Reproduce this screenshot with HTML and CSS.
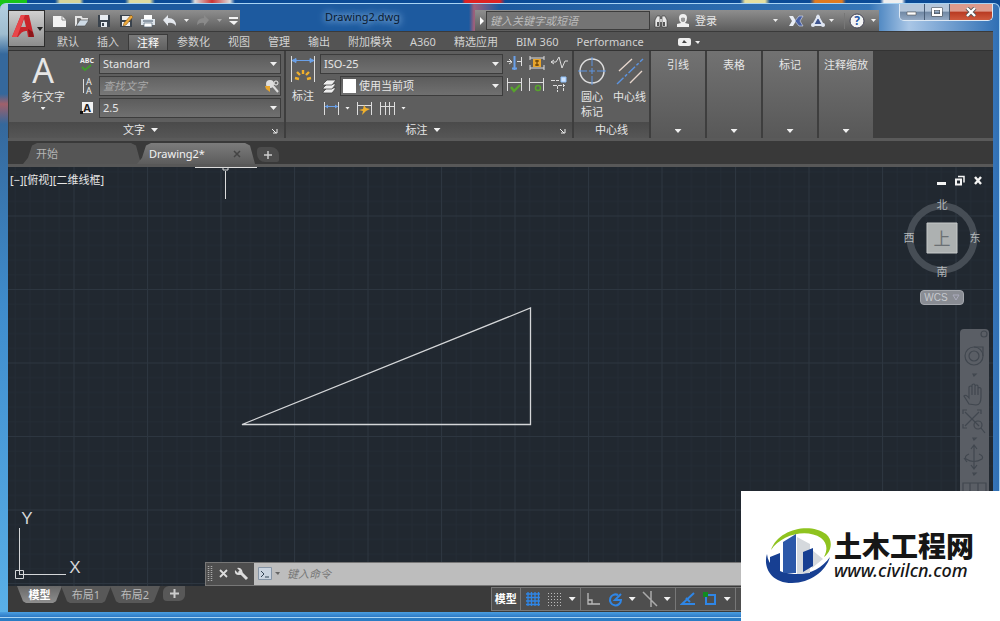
FILE: index.html
```
<!DOCTYPE html>
<html lang="zh-CN">
<head>
    <meta charset="UTF-8">
    <meta name="viewport" content="width=device-width, initial-scale=1.0">
    <title>Drawing2.dwg</title>
    <link rel="stylesheet" href="styles.css">
</head>
<body>
    <div class="window">
        <header class="titlebar">
            <button class="app-button" aria-label="应用程序菜单">
                <svg width="36" height="34" viewBox="0 0 36 34">
                    <path d="M3 25 L12 3 H20 L25 25 H19 L18 19 Q13 18 9 25 Z M12 15 H17 L15 7 Z" fill="#c9252b" fill-rule="evenodd"/>
                    <path d="M12 3 L16 3 L8 25 L3 25 Z" fill="#e8464a"/>
                    <path d="M19 17 L20 25 L25 25 L24 20 Z" fill="#8e1519"/>
                    <path d="M28 15 h6 l-3 4z" fill="#222"/>
                </svg>
            </button>
            <div class="quick-access">
                <button class="tool" aria-label="新建"><svg width="16" height="16"><path d="M1 3h9l4 4v7H1z" fill="#f2f2f2"/><path d="M10 3v4h4" fill="none" stroke="#888"/></svg></button>
                <button class="tool" aria-label="打开"><svg width="16" height="16"><path d="M2 13V4h5l1 2h5v2" fill="none" stroke="#e6e6e6" stroke-width="2"/><path d="M2 13l4-6h9l-4 6z" fill="#cfdbe6" stroke="#444" stroke-width=".6"/></svg></button>
                <button class="tool" aria-label="保存"><svg width="16" height="16"><path d="M2 2h12v12H2z" fill="#3a434d"/><path d="M4 2h8v5H4zM5 9h6v5H5z" fill="#e8edf2"/><path d="M6 10h2v3H6z" fill="#3a434d"/></svg></button>
                <button class="tool" aria-label="另存为"><svg width="16" height="16"><path d="M2 2h12v12H2z" fill="#3a434d"/><path d="M4 3h8v4H4zM4 9h8v4H4z" fill="#eee"/><path d="M6 10l7-8 2 2-7 8-3 1z" fill="#eda93b" stroke="#7a4c10" stroke-width=".5"/></svg></button>
                <button class="tool" aria-label="打印"><svg width="16" height="16"><path d="M4 2h8v4H4z" fill="#fff"/><path d="M1 6h14v6H1z" fill="#dce3ea"/><path d="M4 10h8v4H4z" fill="#fff" stroke="#567" stroke-width=".7"/><path d="M3 8h10" stroke="#456"/></svg></button>
                <button class="tool" aria-label="放弃"><svg width="16" height="16"><path d="M1 7l5-5v3q8 0 8 8q-3-4-8-3v3z" fill="#e4e8ee"/></svg></button>
                <button class="drop" aria-label="放弃列表"></button>
                <button class="tool" aria-label="重做"><svg width="16" height="16"><path d="M14 7l-5-5v3q-7 0-7 7q3-3 7-2v3z" fill="#8a8a8a"/></svg></button>
                <button class="drop dim" aria-label="重做列表"></button>
                <button class="tool" aria-label="自定义快速访问工具栏"><svg width="12" height="12"><path d="M1 2h9v2H1zM1 6h9l-4 4z" fill="#f4f4f4"/></svg></button>
            </div>
            <h1 class="document-title">Drawing2.dwg</h1>
            <div class="info-center">
                <button class="play" aria-label="收拢"><svg width="8" height="10"><path d="M2 1l4 4-4 4z" fill="#fff"/></svg></button>
                <input class="help-search" type="text" placeholder="键入关键字或短语" aria-label="键入关键字或短语">
                <button class="tool" aria-label="搜索"><svg width="16" height="16"><path d="M2 14V7l2-4h3v11zM9 14V3h3l2 4v7z" fill="#e8e8e8" stroke="#333" stroke-width=".6"/><path d="M4 9h2v4H4zM10 9h2v4h-2z" fill="#555"/><path d="M7 6h2v3H7z" fill="#ccc"/></svg></button>
                <button class="login"><svg width="16" height="16"><path d="M4 5q0-4 4-4t4 4q0 3-2 5l4 1v3H2v-3l4-1Q4 8 4 5z" fill="#f0f0f0"/><path d="M6 5q2-1 4 0v3q-2 2-4 0z" fill="#999"/></svg>登录</button>
                <button class="drop login-drop" aria-label="登录选项"></button>
                <button class="tool" aria-label="Exchange"><svg width="16" height="16"><path d="M1 3h4l3 5-3 5H1l3-5z" fill="#e9edf5"/><path d="M15 3h-4L7 8l4 5h4l-3-5z" fill="#4860a4" stroke="#dbe2f2" stroke-width=".6"/></svg></button>
                <button class="tool a360" aria-label="A360"><svg width="16" height="16"><path d="M8 3L3 12h10z" fill="#3f5590" stroke="#dfe6f2" stroke-width="2"/><circle cx="8" cy="4" r="2" fill="#dfe6f2"/><circle cx="3" cy="12" r="2" fill="#dfe6f2"/><circle cx="13" cy="12" r="2" fill="#dfe6f2"/></svg></button>
                <button class="drop" aria-label="A360 选项"></button>
                <button class="tool help" aria-label="帮助"><svg width="16" height="16"><circle cx="8" cy="8" r="7" fill="#f4f4f4" stroke="#445"/><text x="8" y="12" text-anchor="middle" font-size="12" font-weight="bold" fill="#2257a8">?</text></svg></button>
                <button class="drop" aria-label="帮助选项"></button>
            </div>
            <div class="window-buttons">
                <button aria-label="最小化"><svg width="12" height="10"><path d="M1 5h9v3H1z" fill="#fff" stroke="#555" stroke-width=".6"/></svg></button>
                <button aria-label="最大化"><svg width="12" height="10"><path d="M2 2h8v6H2z" fill="none" stroke="#444" stroke-width="3"/><path d="M2 2h8v6H2z" fill="none" stroke="#fff" stroke-width="2"/></svg></button>
                <button class="close" aria-label="关闭"><svg width="12" height="10"><path d="M2 1l8 8M10 1l-8 8" stroke="#555" stroke-width="4"/><path d="M2 1l8 8M10 1l-8 8" stroke="#fff" stroke-width="2.4"/></svg></button>
            </div>
        </header>

        <nav class="ribbon-tabs">
            <button>默认</button>
            <button>插入</button>
            <button class="active">注释</button>
            <button>参数化</button>
            <button>视图</button>
            <button>管理</button>
            <button>输出</button>
            <button>附加模块</button>
            <button>A360</button>
            <button>精选应用</button>
            <button>BIM 360</button>
            <button>Performance</button>
            <button class="minimize" aria-label="最小化功能区"><svg width="24" height="10"><rect x="0" y="1" width="13" height="8" rx="2" fill="#eee"/><path d="M4 6l2-3 3 3z" fill="#444"/><path d="M17 4h5l-2 3z" fill="#eee"/></svg></button>
        </nav>

        <section class="ribbon">
            <div class="panel panel-text">
                <div class="panel-body">
                    <button class="large-button mtext">
                        <b class="letter">A</b>
                        <span>多行文字</span>
                        <i class="arrow"></i>
                    </button>
                    <div class="field-grid">
                        <svg width="20" height="20"><text x="10" y="9" text-anchor="middle" font-size="7" font-weight="bold" fill="#eee">ABC</text><path d="M5 13l3 3 6-5" fill="none" stroke="#3f9a2c" stroke-width="2"/></svg>
                        <select aria-label="文字样式"><option>Standard</option></select>
                        <svg width="20" height="20"><path d="M6.500 3v14" stroke="#ddd"/><text x="12" y="9" text-anchor="middle" font-size="9" fill="#eee">A</text><text x="12" y="18" text-anchor="middle" font-size="9" fill="#eee">A</text></svg>
                        <div class="find">
                            <input type="text" placeholder="查找文字" aria-label="查找文字">
                            <button aria-label="查找"><svg width="16" height="16"><circle cx="6" cy="6" r="4" fill="#ddd"/><path d="M1 8h5v6l-4-3z" fill="#e8a52c"/><path d="M9 8l5 6" stroke="#ddd" stroke-width="2"/><circle cx="12" cy="5" r="2" fill="none" stroke="#eee"/></svg></button>
                        </div>
                        <svg width="20" height="20"><path d="M5 4h11v11H5z" fill="#f2f2f2"/><text x="10" y="14" text-anchor="middle" font-size="11" font-weight="bold" fill="#222">A</text><path d="M3 13h3v3H3z" fill="#111"/></svg>
                        <select aria-label="文字高度"><option>2.5</option></select>
                    </div>
                </div>
                <button class="panel-title">文字<i class="arrow"></i></button>
                <button class="launcher" aria-label="文字样式设置"><svg width="6" height="6"><path d="M0 1l4 4M5 1v4H1" fill="none" stroke="#eee"/></svg></button>
            </div>

            <div class="panel panel-dim">
                <div class="panel-body">
                    <button class="large-button dimension">
                        <svg width="28" height="30"><path d="M2.500 2v26M25.500 2v26" stroke="#ddd"/><path d="M3 6.500h22M3 6.500l4-2v4zM25 6.500l-4-2v4z" stroke="#6aa0e8" fill="#6aa0e8"/><g stroke="#f0b02c" stroke-width="2.400"><path d="M6 24l4 1M8 18l3 3M14 16v4M20 18l-3 3M22 24l-4 1"/></g></svg>
                        <span>标注</span>
                    </button>
                    <div class="dim-fields">
                        <select aria-label="标注样式"><option>ISO-25</option></select>
                        <div class="dim-layer">
                            <svg width="18" height="20"><g fill="#eee" stroke="#444" stroke-width=".8"><path d="M3 16l4-4h9l-4 5H3z"/><path d="M3 12l4-4h9l-4 5H3z"/><path d="M3 8l4-4h9l-4 5H3z"/></g></svg>
                            <select class="with-swatch" aria-label="标注图层"><option>使用当前项</option></select>
                        </div>
                        <div class="dim-tools">
                            <button aria-label="线性"><svg width="18" height="18"><path d="M2.500 3v13M16.500 3v13" stroke="#ddd"/><path d="M3 7.500h13" stroke="#6aa0e8"/><path d="M3 7.500l3-2v4zM16 7.500l-3-2v4z" fill="#6aa0e8"/></svg></button>
                            <i class="arrow small"></i>
                            <button aria-label="快速标注"><svg width="18" height="18"><path d="M2.500 3v13M16.500 3v13M3 6.500h13" stroke="#ddd"/><path d="M9 6l2 3 4 1-4 2-4 4 1-4-4-1 4-1z" fill="#f0b02c"/></svg></button>
                            <button aria-label="连续"><svg width="18" height="18"><path d="M2.500 3v13M7.500 3v13M11.500 3v13M16.500 3v13M3 7.500h13" stroke="#ddd"/></svg></button>
                            <i class="arrow small"></i>
                        </div>
                    </div>
                    <div class="dim-icons">
                        <button aria-label="打断"><svg width="18" height="18"><path d="M1 7.500h5M11 7.500h5M15.500 3v9M3 5l3 3-3 2" stroke="#ddd" fill="none"/><path d="M8.500 2v14M6 14.500h5" stroke="#6aa0e8" stroke-width="2"/></svg></button>
                        <button aria-label="调整间距"><svg width="18" height="18"><path d="M2 2v4M16 2v4M2 4h14M2 11v5M16 11v5M2 14h14" stroke="#ddd" fill="none"/><path d="M5 5h8v8H5z" fill="#e8a52c"/><path d="M9 6v6M7 7h4M7 11h4" stroke="#553300"/></svg></button>
                        <button aria-label="折弯标注"><svg width="18" height="18"><path d="M1 8h5l3-5 3 11 3-7h3M4 6L1 8l3 2" stroke="#ddd" fill="none"/></svg></button>
                        <button aria-label="检验"><svg width="18" height="18"><path d="M1.500 2v13M15.500 2v13M2 6.500h13" stroke="#ddd"/><path d="M5 11l3 4 6-6" stroke="#58a52c" stroke-width="2.400" fill="none"/></svg></button>
                        <button aria-label="更新"><svg width="18" height="18"><path d="M1.500 2v13M15.500 2v13M2 6.500h13" stroke="#ddd"/><circle cx="10" cy="12" r="2.500" stroke="#58a52c" stroke-width="1.500" fill="none"/></svg></button>
                        <button aria-label="重新关联"><svg width="18" height="18"><path d="M11 1h5v5h-5z" fill="#cfe4ff" stroke="#8fc0f8"/><path d="M1 4.500h8M3 9.500h12" stroke="#ddd" stroke-dasharray="4 1"/><path d="M7.500 10v6M13.500 8v8" stroke="#ddd" stroke-dasharray="3 1"/></svg></button>
                    </div>
                </div>
                <button class="panel-title">标注<i class="arrow"></i></button>
                <button class="launcher" aria-label="标注样式设置"><svg width="6" height="6"><path d="M0 1l4 4M5 1v4H1" fill="none" stroke="#eee"/></svg></button>
            </div>

            <div class="panel panel-center">
                <div class="panel-body">
                    <button class="large-button"><svg width="30" height="32"><circle cx="15" cy="17" r="12" fill="none" stroke="#ddd" stroke-width="1.500"/><path d="M1 17h9M12 17h6M20 17h9M15 3v9M15 14v6M15 22v9" stroke="#5c94e0"/></svg><span>圆心<br>标记</span></button>
                    <button class="large-button"><svg width="30" height="32"><path d="M4 17L17 5M15 29l12-12" stroke="#e6d6cc" stroke-width="1.400"/><path d="M2 30L28 5" stroke="#5c94e0" stroke-width="1.400" stroke-dasharray="9 2 3 2"/></svg><span>中心线</span></button>
                </div>
                <div class="panel-title">中心线</div>
            </div>

            <button class="collapsed-panel">引线<i class="arrow"></i></button>
            <button class="collapsed-panel">表格<i class="arrow"></i></button>
            <button class="collapsed-panel">标记<i class="arrow"></i></button>
            <button class="collapsed-panel">注释缩放<i class="arrow"></i></button>
        </section>

        <nav class="file-tabs">
            <button class="file-tab">开始</button>
            <button class="file-tab active">Drawing2*<svg width="8" height="8"><path d="M1 1l6 6M7 1L1 7" stroke="#444" stroke-width="1.500"/></svg></button>
            <button class="add-file" aria-label="新图形"><svg width="10" height="10"><path d="M5 1v8M1 5h8" stroke="#ccc" stroke-width="1.500"/></svg></button>
        </nav>

        <main class="canvas">
            <svg class="drawing">
                <defs>
                    <pattern id="grid" x="65.500" y="48.500" width="73.500" height="73.500" patternUnits="userSpaceOnUse">
                        <path d="M15.200 0v73.500M29.900 0v73.500M44.600 0v73.500M59.300 0v73.500M0 15.200h73.500M0 29.900h73.500M0 44.600h73.500M0 59.300h73.500" stroke="#242c35"/>
                        <path d="M.5 0v73.500M0 .5h73.500" stroke="#2d3640"/>
                    </pattern>
                </defs>
                <rect width="100%" height="100%" fill="url(#grid)"/>
                <path d="M234 257.500L522.500 141V257.500z" fill="none" stroke="#d4d6d8" stroke-width="1.300"/>
                <path d="M187 .5h62M217.500 4v28M215 0h5v3h-5z" fill="none" stroke="#dcdcdc"/>
            </svg>

            <div class="viewport-controls">
                <button>[−]</button><button>[俯视]</button><button>[二维线框]</button>
            </div>

            <div class="document-buttons">
                <button aria-label="最小化图形"><svg width="12" height="12"><path d="M1 7h9v3H1z" fill="#f4f4f4"/></svg></button>
                <button aria-label="还原图形"><svg width="12" height="12"><path d="M2 4.500h5v5H2z" fill="none" stroke="#f4f4f4" stroke-width="2"/><path d="M4 1.500h6v6" fill="none" stroke="#f4f4f4" stroke-width="1.500"/></svg></button>
                <button aria-label="关闭图形"><svg width="12" height="12"><path d="M3 2l6 7M9 2L3 9" stroke="#f4f4f4" stroke-width="2.400"/></svg></button>
            </div>

            <div class="view-cube">
                <svg width="84" height="88">
                    <circle cx="42" cy="43" r="32" fill="none" stroke="#464d55" stroke-width="7"/>
                    <path d="M27 28h30v30H27z" fill="#adb1b1" stroke="#c6c9c9"/>
                    <g fill="#b4b8bb" font-size="11" text-anchor="middle">
                        <text x="42" y="14">北</text>
                        <text x="9" y="47">西</text>
                        <text x="75" y="47">东</text>
                        <text x="42" y="81">南</text>
                    </g>
                    <text x="42" y="50" text-anchor="middle" font-size="17" fill="#6b7074">上</text>
                </svg>
                <button class="wcs">WCS <svg width="8" height="7"><path d="M1 1h6L4 6z" fill="none" stroke="#aab"/></svg></button>
            </div>

            <div class="nav-bar">
                <svg width="29" height="170" fill="none" stroke="#41474f" stroke-width="1.200">
                    <circle cx="24" cy="5" r="3"/>
                    <circle cx="14" cy="27" r="9"/><circle cx="14" cy="27" r="5"/><path d="M14 18h9v9"/>
                    <path d="M13 45h3l-2 2z"/>
                    <path d="M9 75l-5-8q2-2 5 2V58q2-2 3 0v8-10q2-2 3 0v10-9q2-2 3 0v9-7q3-1 3 1v8q0 8-5 8z"/>
                    <path d="M5 83l14 14M19 83L5 97M3 85v-4h4M17 81h4v4M3 95v4h4"/><circle cx="18" cy="96" r="4"/><path d="M21 99l4 5"/>
                    <path d="M13 109h3l-2 2z"/>
                    <path d="M14 117v22M11 120l3-4 3 4M11 136l3 4 3-4M9 125q-5 2-3 5 8 5 16 0 2-3-3-5M7 133l-3-4"/>
                    <path d="M13 144h3l-2 2z"/>
                    <path d="M3 154h23v10H3zM10 154v10M18 154v10"/>
                </svg>
            </div>

            <svg class="ucs" width="90" height="78">
                <path d="M11.500 20v47M12 66.500h46" stroke="#d4d6d8"/>
                <path d="M7.500 62.500h8v8h-8z" fill="none" stroke="#d4d6d8"/>
                <text x="19" y="16" text-anchor="middle" font-size="17">Y</text>
                <text x="67" y="65" text-anchor="middle" font-size="17">X</text>
            </svg>

            <div class="command-line">
                <svg width="8" height="18"><path d="M2.500 1v16M5.500 1v16" stroke="#aaa" stroke-width="1.500" stroke-dasharray="1 1"/></svg>
                <button aria-label="关闭命令行"><svg width="12" height="12"><path d="M2 2l7 7M9 2L2 9" stroke="#ddd" stroke-width="1.800"/></svg></button>
                <button aria-label="自定义"><svg width="16" height="16"><path d="M5 5l8 8" stroke="#ddd" stroke-width="3"/><path d="M3 2l3 3-2 2-3-3q-1 5 4 5 5 0 3-5Q6 1 3 2z" fill="#ddd"/></svg></button>
                <div class="command-entry">
                    <svg width="24" height="16"><path d="M1.500 1.500h13v12h-13z" fill="#c9d3df" stroke="#8594a5"/><path d="M4 5l3 3-3 3M8 11h4" fill="none" stroke="#345"/><path d="M18 6h5l-2 3z" fill="#666"/></svg>
                    <input type="text" placeholder="键入命令" aria-label="键入命令">
                </div>
            </div>
        </main>

        <footer class="status-bar">
            <nav class="layout-tabs">
                <button class="active">模型</button>
                <button>布局1</button>
                <button>布局2</button>
                <button class="add" aria-label="新建布局"><svg width="9" height="9"><path d="M4.500 0v9M0 4.500h9" stroke="#ccc" stroke-width="2"/></svg></button>
            </nav>
            <div class="status-tools">
                <button class="space">模型</button>
                <div class="status-group">
                    <button aria-label="栅格"><svg width="16" height="16"><path d="M3 1v14M6.500 1v14M10 1v14M13.500 1v14M1 3h14M1 6.500h14M1 10h14M1 13.500h14" stroke="#2f86e6" stroke-width="1.300"/></svg></button>
                    <button aria-label="捕捉"><svg width="16" height="16"><path d="M1 2.500h14M1 5.500h14M1 8.500h14M1 11.500h14M1 14.500h14" stroke="#bbb" stroke-dasharray="1 2"/></svg></button>
                    <i class="arrow"></i>
                </div>
                <div class="status-group">
                    <button aria-label="正交"><svg width="16" height="16"><path d="M3 2v11h12M3 9h4v4" fill="none" stroke="#bbb" stroke-width="1.300"/></svg></button>
                    <button aria-label="极轴追踪"><svg width="16" height="16"><path d="M11 4a5.500 5.500 0 1 0 3 5H8l6-6" fill="none" stroke="#2f86e6" stroke-width="2"/></svg></button>
                    <i class="arrow"></i>
                    <button aria-label="等轴测草图"><svg width="16" height="16"><path d="M1 1l14 14M9 0v16" stroke="#aaa" stroke-width="1.500"/></svg></button>
                    <i class="arrow"></i>
                </div>
                <div class="status-group">
                    <button aria-label="对象捕捉追踪"><svg width="16" height="16"><path d="M14 2L2 13h13" fill="none" stroke="#2f86e6" stroke-width="2"/><path d="M6 7l4 4" stroke="#2f86e6" stroke-width="2"/></svg></button>
                    <button aria-label="对象捕捉"><svg width="16" height="16"><path d="M4 4h9v9H4z" fill="none" stroke="#2f86e6" stroke-width="2"/><path d="M1 1h5v5H1z" fill="#128a20"/></svg></button>
                    <i class="arrow"></i>
                </div>
                <div class="status-group">
                    <button aria-label="线宽"><svg width="16" height="16"><path d="M1 13L14 3v10z" fill="#2f86e6"/></svg></button>
                </div>
            </div>
        </footer>
    </div>

    <a class="site-badge" href="#">
        <svg width="70" height="60" viewBox="0 0 70 60">
            <path d="M7 24C14 3 46-4 62 8c8 7 5 18-2 23 4-8 3-14-3-19C42 2 17 9 7 24z" fill="#8fc31f"/>
            <path d="M3 28C-1 40 6 57 28 57c18 0 34-12 38-26-8 11-20 18-36 17C14 47 4 40 3 28z" fill="#173f92"/>
            <path d="M33 11l13 7v29l-13 1zM48 24l11 9-11 9z" fill="#d5d9dd"/>
            <path d="M19 16l13-8v39H19z" fill="#2c58a8"/>
            <path d="M6 31l10-4v19q-7-2-10-7zM39 26l10-4v18l-10 6z" fill="#173f92"/>
        </svg>
        <span class="site-name">
            <strong>土木工程网</strong>
            <span>www.civilcn.com</span>
        </span>
    </a>
</body>
</html>
```
FILE: styles.css
```
* {
    box-sizing: border-box;
}

body {
    margin: 0;
    height: 100vh;
    overflow: hidden;
    padding: 3px 0;
    display: flex;
    font-family: "Noto Sans", "Noto Sans CJK SC", sans-serif;
    font-size: 11px;
    line-height: 16px;
    color: #e6e6e6;
    background: linear-gradient(90deg, #18c418 27px, #0b4b96 27px, #0b4b96 55px, #d8d49a 60px, #d8d49a 80px, #0b4b96 84px, #0b4b96 125px, #e0dca0 130px, #e0dca0 150px, #0b4b96 155px, #0b4b96 190px, #ddd 195px, #c33 212px, #ddd 230px, #0b4b96 235px, #0b4b96 462px, #d22 465px, #d22 500px, #0b4b96 505px, #0b4b96 740px, #e6e0a0 745px, #e6e0a0 765px, #0b4b96 770px, #0b4b96 810px, #e07a20 815px, #e07a20 842px, #0b4b96 846px, #0b4b96 880px, #eee 884px, #eee 902px, #0b4b96 906px) no-repeat top / 100% 8px, #2a7cc4;
}

button, input, select {
    margin: 0;
    padding: 0;
    border: none;
    background: none;
    color: inherit;
    font: inherit;
}

button {
    cursor: pointer;
    white-space: nowrap;
}

svg {
    display: block;
    flex: none;
}

.window {
    flex: 1;
    min-width: 0;
    display: flex;
    flex-direction: column;
    padding: 0 6px 5px 8px;
    border: 1px solid #a8d4f4;
    border-left: none;
    border-radius: 6px 6px 0 0;
    background:
        linear-gradient(#4a9fe2, #2c78c4) no-repeat bottom / 100% 5px,
        linear-gradient(#b4cfe0, #9fbdd0 30px, #35689c 50px, #35689c 90px, #a0606a 100px, #35689c 120px, #3f8ccc 300px, #5ab0e8) no-repeat left / 8px 100%,
        linear-gradient(90deg, #1d5a9f 45%, #1d5a9f calc(100% - 530px), #a0607a calc(100% - 525px), #1d5a9f calc(100% - 500px), #3576b8 calc(100% - 130px), #a9c6e6 calc(100% - 90px), #2f6fb4 100%);
}

/* title bar */

.titlebar {
    position: relative;
    display: flex;
    align-items: flex-end;
    height: 27px;
}

.app-button {
    position: absolute;
    z-index: 1;
    left: 0;
    top: 6px;
    width: 37px;
    height: 37px;
    border: 1px solid #2c2c2c;
    background: linear-gradient(#d0d0d0, #8c8c8c);
}

.quick-access, .info-center {
    display: flex;
    align-items: center;
    height: 21px;
    background: linear-gradient(#8e8e8e, #5c5c5c);
}

.quick-access {
    gap: 6px;
    padding-left: 44px;
}

.tool {
    display: flex;
}

.drop {
    width: 5px;
    height: 3px;
    background: #eee;
    clip-path: polygon(0 0, 100% 0, 50% 100%);
}

.dim {
    opacity: 0.4;
}

.document-title {
    flex: 1;
    margin: 0;
    padding-left: 10px;
    text-align: center;
    font-size: 11px;
    font-weight: normal;
    line-height: 28px;
    color: #0a1a30;
    text-shadow: 0 0 6px #9cc4ec, 0 0 10px #9cc4ec;
}

.info-center {
    gap: 6px;
    padding-right: 3px;
}

.play {
    display: flex;
    align-items: center;
    height: 18px;
    padding-left: 3px;
}

.help-search {
    width: 164px;
    height: 19px;
    margin: 0 -3px 0 -6px;
    padding: 0 3px;
    border: 1px solid #3c3c3c;
    background: #747474;
}

input::placeholder {
    color: #bcbcbc;
    font-style: italic;
    opacity: 1;
}

.login {
    display: flex;
    align-items: center;
    gap: 4px;
    margin-right: 50px;
}

.login-drop {
    margin-right: 4px;
}

.a360 {
    margin-right: -3px;
}

.help {
    margin-left: 4px;
    padding-left: 4px;
    border-left: 1px solid #777;
}

.window-buttons {
    align-self: flex-start;
    display: flex;
    margin-left: 20px;
    border: 1px solid #dce8f4;
    border-top: none;
    border-radius: 0 0 5px 5px;
    overflow: hidden;
}

.window-buttons button {
    display: flex;
    align-items: center;
    justify-content: center;
    width: 25px;
    height: 16px;
    border-right: 1px solid #4a5f78;
    background: linear-gradient(#b4c6da 45%, #7088a4 50%, #94aac4);
}

.window-buttons .close {
    width: 42px;
    border: none;
    background: linear-gradient(#dd9a8c 45%, #b83a22 50%, #cf5a3e);
}

/* ribbon */

.ribbon-tabs {
    display: flex;
    height: 20px;
    padding: 2px 0 0 40px;
    border-top: 1px solid #3a3a3a;
    border-bottom: 1px solid #333;
    background: #545454;
    color: #d2d2d2;
}

.ribbon-tabs button {
    padding: 0 9px;
}

.ribbon-tabs .active {
    padding: 0 8px;
    border: 1px solid #3a3a3a;
    border-bottom: none;
    background: linear-gradient(#7a7a7a, #606060);
    color: #fff;
    line-height: 14px;
}

.ribbon-tabs .minimize {
    margin-left: 16px;
}

.ribbon {
    display: flex;
    gap: 2px;
    height: 90px;
    padding-left: 1px;
    border-bottom: 3px solid #5a5a5a;
    background: #3e3e3e;
}

.panel {
    position: relative;
    display: flex;
    flex-direction: column;
    background: #5e5e5e;
}

.panel-text {
    width: 275px;
}

.panel-dim {
    width: 286px;
}

.panel-center {
    width: 75px;
}

.panel-body {
    flex: 1;
    display: flex;
    padding-top: 3px;
}

.panel-title {
    display: flex;
    align-items: center;
    justify-content: center;
    gap: 6px;
    height: 16px;
    background: linear-gradient(#4a4a4a, #565656);
}

button.panel-title {
    padding-right: 12px;
}

.arrow {
    width: 7px;
    height: 4px;
    background: #f0f0f0;
    clip-path: polygon(0 0, 100% 0, 50% 100%);
}

.arrow.small {
    width: 5px;
    height: 3px;
}

.launcher {
    position: absolute;
    right: 6px;
    bottom: 4px;
}

.large-button {
    display: flex;
    flex-direction: column;
    align-items: center;
    line-height: 15px;
}

.mtext {
    width: 68px;
    gap: 3px;
}

.mtext .arrow {
    width: 5px;
    height: 3px;
}

.letter {
    font-size: 34px;
    font-weight: normal;
    line-height: 32px;
}

.dimension {
    width: 34px;
    gap: 4px;
}

.field-grid {
    flex: 1;
    display: grid;
    grid-template-columns: 20px 1fr;
    grid-auto-rows: 20px;
    gap: 2px;
    padding-right: 3px;
}

select, .find {
    width: 100%;
    min-width: 0;
    height: 20px;
    border: 1px solid #3c3c3c;
    background: linear-gradient(#626262, #787878);
}

select {
    appearance: none;
    padding: 0 3px;
    background: url("data:image/svg+xml,%3Csvg xmlns='http://www.w3.org/2000/svg' width='7' height='4'%3E%3Cpath d='M0 0h7L3.5 4z' fill='%23f0f0f0'/%3E%3C/svg%3E") no-repeat right 3px center, linear-gradient(#5c5c5c, #707070);
}

.find {
    display: flex;
    align-items: center;
    padding-left: 3px;
}

.find input {
    flex: 1;
    min-width: 0;
}

.find input::placeholder {
    color: #a8a8a8;
}

.dim-fields {
    width: 183px;
    display: flex;
    flex-direction: column;
    gap: 2px;
}

.dim-layer {
    display: flex;
    gap: 2px;
}

.with-swatch {
    padding-left: 18px;
    background: linear-gradient(#fff, #fff) no-repeat 2px 2px / 13px 14px, url("data:image/svg+xml,%3Csvg xmlns='http://www.w3.org/2000/svg' width='7' height='4'%3E%3Cpath d='M0 0h7L3.5 4z' fill='%23f0f0f0'/%3E%3C/svg%3E") no-repeat right 3px center, linear-gradient(#5c5c5c, #707070);
}

.dim-tools {
    display: flex;
    align-items: center;
    gap: 5px;
    height: 20px;
    padding-left: 2px;
}

.dim-icons {
    display: grid;
    grid-template-columns: 18px 18px 18px;
    grid-auto-rows: 18px;
    gap: 4px;
    padding-left: 3px;
}

.panel-center .panel-body {
    justify-content: space-around;
}

.panel-center .large-button {
    gap: 3px;
}

.collapsed-panel {
    display: flex;
    flex-direction: column;
    align-items: center;
    justify-content: space-between;
    width: 54px;
    padding: 6px 0 5px;
    background: linear-gradient(#727272, #585858);
}

/* drawing tabs */

.file-tabs {
    display: flex;
    align-items: flex-end;
    height: 26px;
    padding-left: 15px;
    border-bottom: 3px solid #585858;
    background: #393939;
}

.file-tab {
    display: flex;
    align-items: center;
    justify-content: space-between;
    width: 118px;
    height: 21px;
    margin-right: -4px;
    padding: 0 13px;
    background: #555;
    color: #b4b4b4;
    clip-path: polygon(0 100%, 5px 70%, 9px 12%, 14px 0, calc(100% - 10px) 0, calc(100% - 5px) 12%, 100% 100%);
}

.file-tab.active {
    background: linear-gradient(#7c7c7c, #5c5c5c);
    color: #f2f2f2;
    padding: 0 14px 0 12px;
}

.add-file {
    display: flex;
    align-items: center;
    justify-content: center;
    width: 22px;
    height: 15px;
    margin: 0 0 2px 6px;
    border-radius: 4px 8px 2px 8px;
    background: #4c4c4c;
}

/* drawing area */

.canvas {
    position: relative;
    flex: 1;
    min-height: 0;
    background: #212830;
}

.drawing {
    position: absolute;
    width: 100%;
    height: 100%;
}

.viewport-controls {
    position: absolute;
    left: 2px;
    top: 5px;
    display: flex;
}

.document-buttons {
    position: absolute;
    right: 9px;
    top: 8px;
    display: flex;
    gap: 6px;
}

.view-cube {
    position: absolute;
    right: 9px;
    top: 28px;
    display: flex;
    flex-direction: column;
    align-items: center;
    gap: 7px;
}

.wcs {
    display: flex;
    align-items: center;
    gap: 4px;
    height: 15px;
    padding: 0 3px;
    border: 1px solid #a4a7ad;
    border-radius: 4px;
    background: #898c93;
    color: #c6c9ce;
    font-family: "Liberation Sans", sans-serif;
    font-size: 10px;
}

.nav-bar {
    position: absolute;
    right: 4px;
    top: 162px;
    border-radius: 4px 4px 0 0;
    background: #5a5e65;
}

.ucs {
    position: absolute;
    left: 0;
    bottom: 0;
    fill: #d4d6d8;
    font-family: "Liberation Sans", sans-serif;
}

.command-line {
    position: absolute;
    left: 20%;
    right: 0;
    bottom: 0;
    display: flex;
    align-items: center;
    gap: 4px;
    height: 24px;
    border: 1px solid #777;
    background: #4e4e4e;
}

.command-entry {
    flex: 1;
    display: flex;
    align-items: center;
    gap: 6px;
    height: 22px;
    padding-left: 3px;
    background: #bdbdbd;
}

.command-entry input {
    width: 50%;
    color: #333;
}

.command-entry input::placeholder {
    color: #777;
}

/* status bar */

.status-bar {
    display: flex;
    justify-content: space-between;
    height: 26px;
    background: #3a3a3a;
}

.layout-tabs {
    display: flex;
    padding-left: 9px;
}

.layout-tabs button {
    width: 50px;
    height: 17px;
    margin-right: -1px;
    background: #585858;
    color: #bbb;
    clip-path: polygon(0 0, 100% 0, calc(100% - 6px) 90%, calc(100% - 9px) 100%, 9px 100%, 6px 90%);
}

.layout-tabs .active {
    width: 45px;
    background: linear-gradient(#686868, #8e8e8e);
    color: #fff;
    font-weight: bold;
}

.layout-tabs .add {
    display: flex;
    align-items: center;
    justify-content: center;
    width: 22px;
    height: 15px;
    margin-left: 4px;
    clip-path: none;
    border-radius: 6px 0 6px 4px;
}

.status-tools {
    display: flex;
    width: 51%;
    margin-top: 1px;
    height: 24px;
    border: 1px solid #777;
    background: #4e4e4e;
}

.space {
    padding: 0 3px;
    font-weight: bold;
    color: #fff;
}

.status-group {
    display: flex;
    align-items: center;
    gap: 6px;
    padding: 0 4px;
    border-left: 1px solid #777;
}

.status-group button {
    display: flex;
}

/* site badge over the lower right corner */

.site-badge {
    position: fixed;
    right: 0;
    bottom: 0;
    display: flex;
    align-items: center;
    width: 259px;
    height: 130px;
    padding-left: 23px;
    background: #fff;
    color: #161616;
    text-decoration: none;
}

.site-name {
    display: flex;
    flex-direction: column;
    font-family: "Noto Sans", "Noto Sans CJK SC", sans-serif;
    font-size: 18px;
    font-style: italic;
    font-weight: 500;
    line-height: 20px;
}

.site-name strong {
    font-size: 28px;
    font-style: normal;
    font-weight: 900;
    line-height: 28px;
}
```
